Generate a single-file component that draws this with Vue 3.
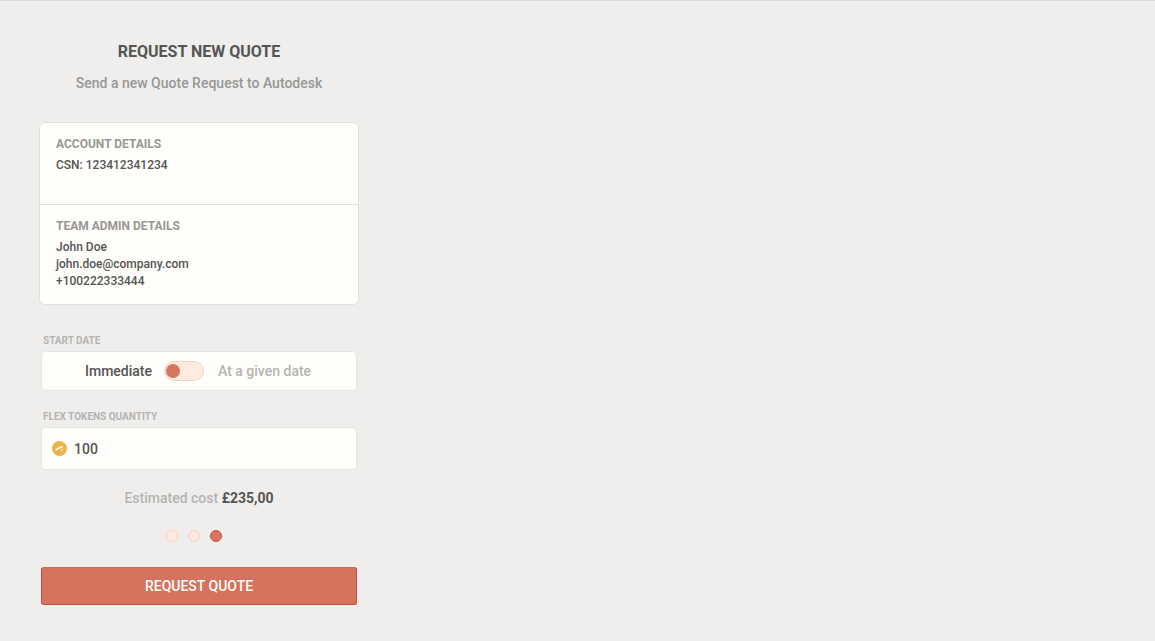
<script setup>
const steps = [false, false, true]
</script>

<template>
  <main class="page">
    <section class="column">
      <h1 class="title">REQUEST NEW QUOTE</h1>
      <p class="subtitle">Send a new Quote Request to Autodesk</p>

      <div class="card">
        <div class="block block-account">
          <h2 class="block-title">ACCOUNT DETAILS</h2>
          <p class="line">CSN: 123412341234</p>
        </div>
        <div class="block block-admin">
          <h2 class="block-title">TEAM ADMIN DETAILS</h2>
          <p class="line">John Doe</p>
          <p class="line">john.doe@company.com</p>
          <p class="line">+100222333444</p>
        </div>
      </div>

      <div class="fields">
        <label class="field-label">START DATE</label>
        <div class="box toggle-box">
          <span class="opt-on">Immediate</span>
          <span class="switch"><span class="knob"></span></span>
          <span class="opt-off">At a given date</span>
        </div>

        <label class="field-label second">FLEX TOKENS QUANTITY</label>
        <div class="box qty-box">
          <svg class="token" viewBox="0 0 15 15" width="15" height="15" aria-hidden="true">
            <circle cx="7.5" cy="7.5" r="7.5" fill="#ecb349" />
            <path d="M3 9.4 C4.6 7 7 5.4 11.4 5 L10 6.9 C7.8 7 6 7.9 4.9 9.4 Z" fill="#fffefb" />
            <path d="M7.6 9.6 L11.2 8.1 L11 9.6 Z" fill="#fffefb" />
          </svg>
          <span class="qty">100</span>
        </div>

        <p class="cost">Estimated cost <b>£235,00</b></p>

        <div class="dots">
          <span v-for="(on, i) in steps" :key="i" class="dot" :class="{ on }"></span>
        </div>

        <button class="submit" type="button">REQUEST QUOTE</button>
      </div>
    </section>
  </main>
</template>

<style>
html, body { margin: 0; background: #efeeed; }
</style>

<style scoped>
.page {
  box-sizing: border-box;
  width: 1155px;
  height: 641px;
  overflow: hidden;
  background: #efeeed;
  border-top: 1px solid #dcdbda;
  font-family: Roboto, "Liberation Sans", sans-serif;
  color: #4a4a48;
}
.column {
  box-sizing: border-box;
  width: 320px;
  margin-left: 39px;
}
.title {
  margin: 41px 0 0;
  font-size: 16px;
  line-height: 20px;
  font-weight: 700;
  text-align: center;
  color: #555553;
}
.subtitle {
  margin: 11px 0 0;
  font-size: 14px;
  line-height: 20px;
  font-weight: 500;
  text-align: center;
  color: #979795;
}
.card {
  box-sizing: border-box;
  margin-top: 29px;
  height: 183px;
  background: #fffefb;
  border: 1px solid #e2e1df;
  border-radius: 6px;
}
.block { box-sizing: border-box; padding: 13px 16px 0; }
.block-account { height: 82px; border-bottom: 1px solid #e2e1df; }
.block-title {
  margin: 0 0 5px;
  font-size: 12px;
  line-height: 16px;
  font-weight: 700;
  color: #979795;
}
.line {
  margin: 0;
  font-size: 12px;
  line-height: 17px;
  font-weight: 500;
  color: #555553;
}
.fields { padding: 0 2px; }
.field-label {
  display: block;
  margin-top: 30px;
  font-size: 10px;
  line-height: 12px;
  font-weight: 700;
  padding-left: 2px;
  color: #b5b4b2;
}
.field-label.second { margin-top: 20px; }
.box {
  box-sizing: border-box;
  background: #fffefb;
  border: 1px solid #e6e5e3;
  border-radius: 4px;
  display: flex;
  align-items: center;
}
.toggle-box {
  margin-top: 4px;
  height: 40px;
  padding-left: 43px;
  font-size: 14px;
  font-weight: 500;
}
.opt-on { color: #555553; }
.opt-off { color: #b5b4b2; }
.switch {
  box-sizing: border-box;
  width: 40px;
  height: 20px;
  margin: 0 14px 0 12px;
  display: flex;
  align-items: center;
  padding-left: 1px;
  background: #ffeae0;
  border: 1px solid #f5d2c4;
  border-radius: 10px;
}
.knob {
  width: 14px;
  height: 14px;
  border-radius: 50%;
  background: #d8735e;
}
.qty-box {
  margin-top: 4px;
  height: 43px;
  padding-left: 10px;
  gap: 7px;
}
.token { flex: none; }
.qty {
  font-size: 14px;
  font-weight: 500;
  color: #555553;
}
.cost {
  margin: 19px 0 0;
  font-size: 14px;
  line-height: 18px;
  font-weight: 500;
  text-align: center;
  color: #b5b4b2;
}
.cost b { font-weight: 700; color: #555553; }
.dots {
  margin-top: 23px;
  padding-right: 10px;
  display: flex;
  justify-content: center;
  gap: 10px;
}
.dot {
  box-sizing: border-box;
  width: 12px;
  height: 12px;
  border-radius: 50%;
  background: #ffeae0;
  border: 1px solid #f5d2c4;
}
.dot.on { background: #d8735e; border-color: #bf5140; }
.submit {
  display: block;
  box-sizing: border-box;
  width: 316px;
  height: 38px;
  margin-top: 25px;
  padding: 0;
  background: #d6725d;
  border: 1px solid #bf5140;
  border-top-color: #c96a56;
  border-radius: 3px;
  color: #fffefb;
  font-family: inherit;
  font-size: 14px;
  font-weight: 500;
}
</style>
